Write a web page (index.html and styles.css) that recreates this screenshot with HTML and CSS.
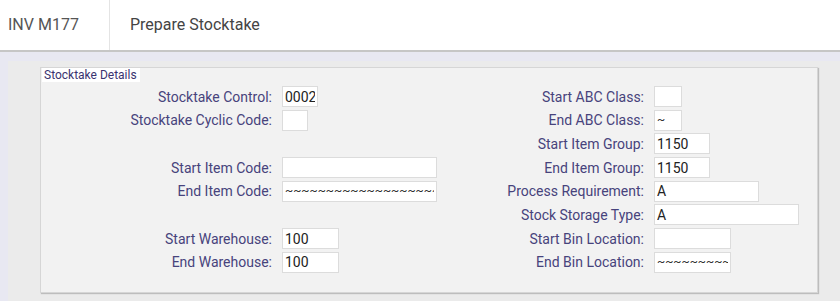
FILE: index.html
```html
<!DOCTYPE html>
<html lang="en">
<head>
  <meta charset="UTF-8" />
  <title>Prepare Stocktake</title>
  <link rel="stylesheet" href="styles.css">
</head>
<body>
  <div class="header">
    <div class="module">INV M177</div>
    <div class="title">Prepare Stocktake</div>
  </div>

  <div class="content">
    <div class="panel">
      <div class="legend">Stocktake Details</div>

      <div class="form">
        <label>Stocktake Control:</label>
        <input type="text" class="w36" value="0002" />
        <label>Start ABC Class:</label>
        <input type="text" class="w28" value="" />

        <label>Stocktake Cyclic Code:</label>
        <input type="text" class="w26" value="" />
        <label>End ABC Class:</label>
        <input type="text" class="w28 tilde" value="~" />

        <div class="spacer"></div>
        <label>Start Item Group:</label>
        <input type="text" class="w56" value="1150" />

        <label>Start Item Code:</label>
        <input type="text" class="w155" value="" />
        <label>End Item Group:</label>
        <input type="text" class="w56" value="1150" />

        <label>End Item Code:</label>
        <input type="text" class="w155 tilde" value="~~~~~~~~~~~~~~~~~~~~" />
        <label>Process Requirement:</label>
        <input type="text" class="w105" value="A" />

        <div class="spacer"></div>
        <label>Stock Storage Type:</label>
        <input type="text" class="w145" value="A" />

        <label>Start Warehouse:</label>
        <input type="text" class="w57" value="100" />
        <label>Start Bin Location:</label>
        <input type="text" class="w77" value="" />

        <label>End Warehouse:</label>
        <input type="text" class="w57" value="100" />
        <label>End Bin Location:</label>
        <input type="text" class="w77 tilde" value="~~~~~~~~~~~~" />
      </div>
    </div>
  </div>
</body>
</html>
```

FILE: styles.css
```css
* {
  margin: 0;
  padding: 0;
  box-sizing: border-box;
}

body {
  background: #e8e8f2;
  font-family: Roboto, "Liberation Sans", sans-serif;
}

.header {
  display: flex;
  height: 52px;
  background: white;
  border-bottom: 2px solid #c6c6c6;
}

.module {
  width: 110px;
  padding-left: 8px;
  line-height: 50px;
  font-size: 16px;
  color: #555;
  border-right: 1px solid #e4e4e4;
}

.title {
  padding-left: 20px;
  line-height: 50px;
  font-size: 16px;
  color: #444;
}

.content {
  margin: 9px 0 0 8px;
  padding: 6px 22px 9px 32px;
  background: #ebebeb;
  height: 240px;
}

.panel {
  width: 778px;
  height: 226px;
  background: #f2f2f2;
  border: 1px solid #d6d6d6;
  box-shadow: 1px 1px 1px #bdbdbd;
  padding: 0 0 0 1px;
}

.legend {
  display: inline-block;
  vertical-align: top;
  background: white;
  color: #3a3370;
  font-size: 12px;
  line-height: 14px;
  padding: 0 3px 0 2px;
}

.form {
  display: grid;
  grid-template-columns: 230px 159px 193px 1fr;
  grid-auto-rows: 21px;
  column-gap: 10px;
  row-gap: 2.7px;
  align-items: center;
  margin-top: -1px;
}

.form label {
  text-align: right;
  font-size: 14px;
  color: #47437c;
}

.form .spacer {
  grid-column: span 2;
}

.form input {
  height: 21px;
  border: 1px solid #dcdcdc;
  background: white;
  font-family: Roboto, "Liberation Sans", sans-serif;
  font-size: 14px;
  color: #222;
  padding: 0 2px;
  outline: none;
}

.form input.tilde {
  font-size: 12px;
  color: #333;
}

.w26 { width: 26px; }
.w28 { width: 28px; }
.w36 { width: 36px; }
.w56 { width: 56px; }
.w57 { width: 57px; }
.w77 { width: 77px; }
.w105 { width: 105px; }
.w145 { width: 145px; }
.w155 { width: 155px; }
```
